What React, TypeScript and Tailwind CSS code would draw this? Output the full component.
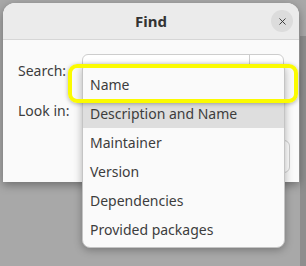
import { X } from "lucide-react";

const options = [
  "Name",
  "Description and Name",
  "Maintainer",
  "Version",
  "Dependencies",
  "Provided packages",
];

export default function App() {
  const hovered = 1;

  return (
    <div className="relative w-[306px] h-[266px] overflow-hidden bg-[#a8a8a8] font-['Noto_Sans',sans-serif] text-[#3d3d3d]">
      {/* window behind the dialog */}
      <div className="absolute right-0 top-[36px] bottom-0 w-[6px] bg-[#8e8e8e]" />

      {/* Find dialog */}
      <div className="relative ml-[3px] mt-[3px] w-[296px] h-[179px] rounded-t-[12px] bg-[#fafafa] shadow-[0_3px_10px_rgba(0,0,0,0.35)]">
        <div className="relative h-[37px] flex items-center justify-center rounded-t-[12px] bg-[#ebebeb] border-b border-[#d6d6d6]">
          <span className="text-[15px] font-bold text-[#333]">Find</span>
          <button className="absolute right-[6px] top-[7px] w-[22px] h-[22px] rounded-full bg-[#dcdcdc] flex items-center justify-center">
            <X className="w-[11px] h-[11px] text-[#333]" strokeWidth={2} />
          </button>
        </div>

        <div className="pl-[15px] pr-[15px] pt-[14px]">
          <div className="grid grid-cols-[64px_1fr] gap-y-[5px] items-center">
            <span className="text-[14px] -mt-[1px]">Search:</span>
            <div className="h-[34px] flex rounded-[6px] border border-[#cdcdcd] bg-white">
              <div className="flex-1" />
              <div className="w-[34px] border-l border-[#cdcdcd]" />
            </div>
            <span className="text-[14px]">Look in:</span>
            <div className="h-[34px] rounded-[6px] border border-[#cdcdcd] bg-white" />
          </div>
          <div className="flex justify-end mt-[13px] -mr-[6px]">
            <div className="w-[90px] h-[33px] rounded-[6px] border border-[#cdcdcd] bg-white" />
          </div>
        </div>
      </div>

      {/* Search field dropdown */}
      <div className="absolute left-[82px] top-[65px] w-[203px] pt-[4px] pb-[3px] rounded-b-[8px] rounded-t-[4px] bg-[#fafafa] border border-[#c4c4c4] shadow-[0_2px_8px_rgba(0,0,0,0.3)]">
        {options.map((opt, i) => (
          <div
            key={opt}
            className={`h-[29px] flex items-center px-[7px] text-[14px] ${i === hovered ? "bg-[#dedede]" : ""}`}
          >
            {opt}
          </div>
        ))}
      </div>

      {/* highlight around first item */}
      <div className="absolute left-[68px] top-[64px] w-[230px] h-[39px] rounded-[9px] border-[4px] border-[#fbfb00] shadow-[0_1px_4px_rgba(0,0,0,0.3)]" />
    </div>
  );
}
